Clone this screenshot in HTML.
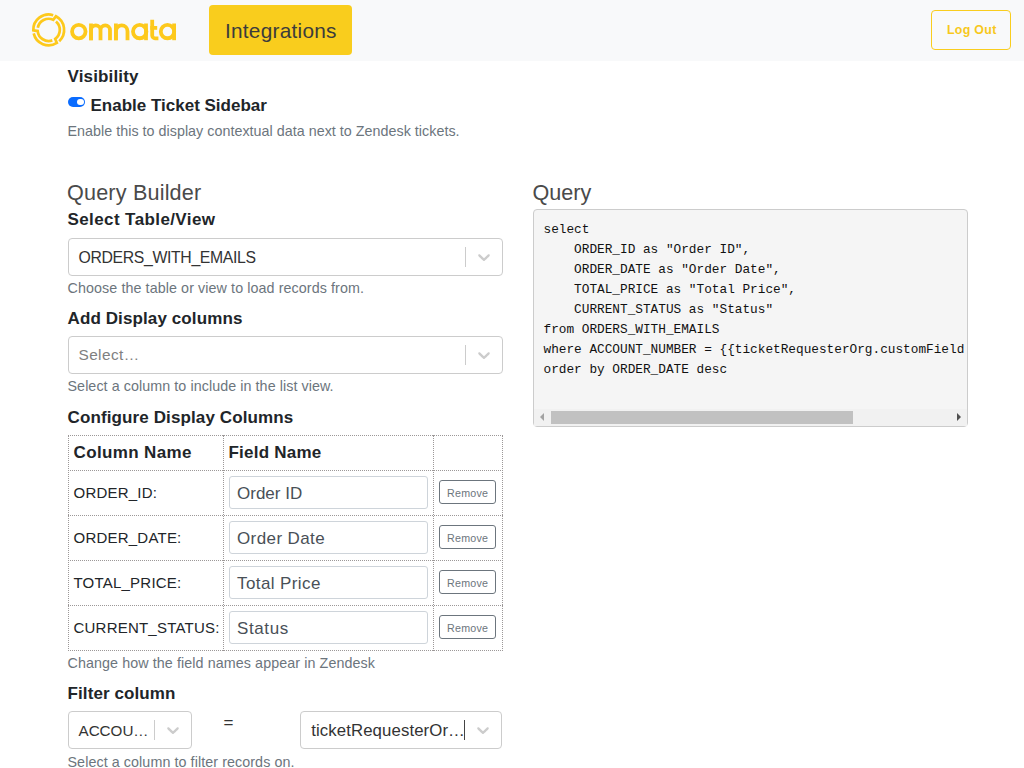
<!DOCTYPE html>
<html><head><meta charset="utf-8"><title>Omnata</title>
<style>
html,body{margin:0;padding:0;background:#fff;width:1024px;height:768px;overflow:hidden;position:relative}
.t{position:absolute;white-space:pre}
.b{position:absolute}
</style></head><body>
<div class="b" style="left:0px;top:0px;width:1024px;height:61px;background:#f8f9fa"></div>
<svg width="200" height="60" viewBox="0 0 200 60" style="position:absolute;left:0;top:0"><path d="M37.80,27.78 A11.1,11.1 0 0 1 53.21,19.76 L55.93,16.30 A15.4,15.4 0 0 1 59.20,41.16" fill="none" stroke="#fdc91c" stroke-width="2.7"/><path d="M55.98,21.52 A11.1,11.1 0 0 1 55.22,38.88 L56.86,42.96 A15.4,15.4 0 0 1 33.69,33.36" fill="none" stroke="#fdc91c" stroke-width="2.7"/><path d="M52.31,40.40 A11.1,11.1 0 0 1 37.66,31.06 L33.31,30.44 A15.4,15.4 0 0 1 53.20,15.17" fill="none" stroke="#fdc91c" stroke-width="2.7"/><g fill="none" stroke="#fdc91c" stroke-width="3.8" stroke-linecap="butt"><circle cx="78.8" cy="31.55" r="6.75"/><path d="M91,40.2 V30.15 A4.75,4.75 0 0 1 100.5,30.15 V40.2 M100.5,30.15 A4.75,4.75 0 0 1 110,30.15 V40.2"/><path d="M91,23.5 V40.2"/><path d="M115.9,40.2 V31.199999999999996 A5.799999999999997,5.799999999999997 0 0 1 127.5,31.199999999999996 V40.2"/><path d="M115.9,23.5 V40.2"/><circle cx="139.7" cy="31.55" r="6.7"/><path d="M146,23.5 V40.2"/><path d="M152.2,19.7 V35.5 A2.8,2.8 0 0 0 155,38.300000000000004 H158.4"/><path d="M150.3,27.9 H157.2"/><circle cx="167.5" cy="31.55" r="6.7"/><path d="M174.1,23.5 V40.2"/></g></svg>
<div class="b" style="left:209px;top:5px;width:143px;height:50px;background:#f9cd1d;border-radius:4px"></div>
<div class="t" style="left:225px;top:18.81px;font-size:20.8px;line-height:24.96px;color:#3c3c3c;font-weight:400;font-family:'Liberation Sans',sans-serif;letter-spacing:0.25px;">Integrations</div>
<div class="b" style="left:931px;top:10px;width:80px;height:40px;border:1px solid #f9cd1d;border-radius:4px;box-sizing:border-box"></div>
<div class="t" style="left:947px;top:23.26px;font-size:12.4px;line-height:14.88px;color:#f7c81c;font-weight:700;font-family:'Liberation Sans',sans-serif;letter-spacing:0.3px;">Log Out</div>
<div class="t" style="left:67.5px;top:66.91px;font-size:17px;line-height:20.4px;color:#212529;font-weight:700;font-family:'Liberation Sans',sans-serif;letter-spacing:0.15px;">Visibility</div>
<div class="b" style="left:68px;top:97px;width:17px;height:10px;background:#0a6cff;border-radius:5px"></div>
<div class="b" style="left:77.4px;top:98.8px;width:6.199999999999989px;height:6.200000000000003px;background:#fff;border-radius:50%"></div>
<div class="t" style="left:90.5px;top:95.91px;font-size:17px;line-height:20.4px;color:#212529;font-weight:700;font-family:'Liberation Sans',sans-serif;letter-spacing:0px;">Enable Ticket Sidebar</div>
<div class="t" style="left:67.5px;top:122.97px;font-size:14.3px;line-height:17.16px;color:#6c757d;font-weight:400;font-family:'Liberation Sans',sans-serif;letter-spacing:0.03px;">Enable this to display contextual data next to Zendesk tickets.</div>
<div class="t" style="left:67px;top:179.56px;font-size:21.6px;line-height:25.92px;color:#4a4a4a;font-weight:400;font-family:'Liberation Sans',sans-serif;letter-spacing:0.18px;">Query Builder</div>
<div class="t" style="left:67.5px;top:210.11px;font-size:17px;line-height:20.4px;color:#212529;font-weight:700;font-family:'Liberation Sans',sans-serif;letter-spacing:0.4px;">Select Table/View</div>
<div class="b" style="left:68px;top:238px;width:435px;height:38px;border:1px solid #ccc;border-radius:4px;box-sizing:border-box;background:#fff"></div>
<div class="b" style="left:465px;top:247px;width:1px;height:20px;background:#ccc"></div>
<svg width="20" height="20" viewBox="0 0 20 20" style="position:absolute;left:474px;top:247.0px"><path fill="#ccc" d="M4.516 7.548c0.436-0.446 1.043-0.481 1.576 0l3.908 3.747 3.908-3.747c0.533-0.481 1.141-0.446 1.574 0 0.436 0.445 0.408 1.197 0 1.615-0.406 0.418-4.695 4.502-4.695 4.502-0.217 0.223-0.502 0.335-0.787 0.335s-0.57-0.112-0.789-0.335c0 0-4.287-4.084-4.695-4.502s-0.436-1.17 0-1.615z"/></svg>
<div class="t" style="left:78.5px;top:248.55px;font-size:15.8px;line-height:18.96px;color:#333;font-weight:400;font-family:'Liberation Sans',sans-serif;letter-spacing:-0.35px;">ORDERS_WITH_EMAILS</div>
<div class="t" style="left:67.5px;top:279.97px;font-size:14.3px;line-height:17.16px;color:#6c757d;font-weight:400;font-family:'Liberation Sans',sans-serif;letter-spacing:0.09px;">Choose the table or view to load records from.</div>
<div class="t" style="left:67.5px;top:308.51px;font-size:17px;line-height:20.4px;color:#212529;font-weight:700;font-family:'Liberation Sans',sans-serif;letter-spacing:0.11px;">Add Display columns</div>
<div class="b" style="left:68px;top:336px;width:435px;height:38px;border:1px solid #ccc;border-radius:4px;box-sizing:border-box;background:#fff"></div>
<div class="b" style="left:465px;top:345px;width:1px;height:20px;background:#ccc"></div>
<svg width="20" height="20" viewBox="0 0 20 20" style="position:absolute;left:474px;top:345.0px"><path fill="#ccc" d="M4.516 7.548c0.436-0.446 1.043-0.481 1.576 0l3.908 3.747 3.908-3.747c0.533-0.481 1.141-0.446 1.574 0 0.436 0.445 0.408 1.197 0 1.615-0.406 0.418-4.695 4.502-4.695 4.502-0.217 0.223-0.502 0.335-0.787 0.335s-0.57-0.112-0.789-0.335c0 0-4.287-4.084-4.695-4.502s-0.436-1.17 0-1.615z"/></svg>
<div class="t" style="left:78.5px;top:346.42px;font-size:15.4px;line-height:18.48px;color:#808080;font-weight:400;font-family:'Liberation Sans',sans-serif;letter-spacing:0.4px;">Select…</div>
<div class="t" style="left:67.5px;top:378.27px;font-size:14.3px;line-height:17.16px;color:#6c757d;font-weight:400;font-family:'Liberation Sans',sans-serif;letter-spacing:0.07px;">Select a column to include in the list view.</div>
<div class="t" style="left:67.5px;top:407.51px;font-size:17px;line-height:20.4px;color:#212529;font-weight:700;font-family:'Liberation Sans',sans-serif;letter-spacing:0.12px;">Configure Display Columns</div>
<div class="b" style="left:68px;top:435px;width:435px;height:1px;border-top:1px dotted #9c9898;box-sizing:border-box"></div>
<div class="b" style="left:68px;top:470px;width:435px;height:1px;border-top:1px dotted #9c9898;box-sizing:border-box"></div>
<div class="b" style="left:68px;top:515px;width:435px;height:1px;border-top:1px dotted #9c9898;box-sizing:border-box"></div>
<div class="b" style="left:68px;top:560px;width:435px;height:1px;border-top:1px dotted #9c9898;box-sizing:border-box"></div>
<div class="b" style="left:68px;top:605px;width:435px;height:1px;border-top:1px dotted #9c9898;box-sizing:border-box"></div>
<div class="b" style="left:68px;top:650px;width:435px;height:1px;border-top:1px dotted #9c9898;box-sizing:border-box"></div>
<div class="b" style="left:68px;top:435px;width:1px;height:216px;border-left:1px dotted #9c9898;box-sizing:border-box"></div>
<div class="b" style="left:223px;top:435px;width:1px;height:216px;border-left:1px dotted #9c9898;box-sizing:border-box"></div>
<div class="b" style="left:433px;top:435px;width:1px;height:216px;border-left:1px dotted #9c9898;box-sizing:border-box"></div>
<div class="b" style="left:502px;top:435px;width:1px;height:216px;border-left:1px dotted #9c9898;box-sizing:border-box"></div>
<div class="t" style="left:73.5px;top:443.21px;font-size:17px;line-height:20.4px;color:#212529;font-weight:700;font-family:'Liberation Sans',sans-serif;letter-spacing:0.36px;">Column Name</div>
<div class="t" style="left:228.5px;top:443.21px;font-size:17px;line-height:20.4px;color:#212529;font-weight:700;font-family:'Liberation Sans',sans-serif;letter-spacing:0.22px;">Field Name</div>
<div class="t" style="left:73.5px;top:484.10px;font-size:15px;line-height:18.0px;color:#212529;font-weight:400;font-family:'Liberation Sans',sans-serif;letter-spacing:0.22px;">ORDER_ID:</div>
<div class="b" style="left:229px;top:476px;width:199px;height:33px;border:1px solid #ced4da;border-radius:3px;box-sizing:border-box"></div>
<div class="t" style="left:237px;top:483.91px;font-size:17px;line-height:20.4px;color:#495057;font-weight:400;font-family:'Liberation Sans',sans-serif;letter-spacing:0px;">Order ID</div>
<div class="b" style="left:439px;top:480px;width:57px;height:24px;border:1px solid #6c757d;border-radius:3px;box-sizing:border-box"></div>
<div class="t" style="left:447px;top:486.87px;font-size:10.7px;line-height:12.84px;color:#6c757d;font-weight:400;font-family:'Liberation Sans',sans-serif;letter-spacing:0.25px;">Remove</div>
<div class="t" style="left:73.5px;top:529.10px;font-size:15px;line-height:18.0px;color:#212529;font-weight:400;font-family:'Liberation Sans',sans-serif;letter-spacing:0.22px;">ORDER_DATE:</div>
<div class="b" style="left:229px;top:521px;width:199px;height:33px;border:1px solid #ced4da;border-radius:3px;box-sizing:border-box"></div>
<div class="t" style="left:237px;top:528.91px;font-size:17px;line-height:20.4px;color:#495057;font-weight:400;font-family:'Liberation Sans',sans-serif;letter-spacing:0.4px;">Order Date</div>
<div class="b" style="left:439px;top:525px;width:57px;height:24px;border:1px solid #6c757d;border-radius:3px;box-sizing:border-box"></div>
<div class="t" style="left:447px;top:531.87px;font-size:10.7px;line-height:12.84px;color:#6c757d;font-weight:400;font-family:'Liberation Sans',sans-serif;letter-spacing:0.25px;">Remove</div>
<div class="t" style="left:73.5px;top:574.10px;font-size:15px;line-height:18.0px;color:#212529;font-weight:400;font-family:'Liberation Sans',sans-serif;letter-spacing:0.22px;">TOTAL_PRICE:</div>
<div class="b" style="left:229px;top:566px;width:199px;height:33px;border:1px solid #ced4da;border-radius:3px;box-sizing:border-box"></div>
<div class="t" style="left:237px;top:573.91px;font-size:17px;line-height:20.4px;color:#495057;font-weight:400;font-family:'Liberation Sans',sans-serif;letter-spacing:0.4px;">Total Price</div>
<div class="b" style="left:439px;top:570px;width:57px;height:24px;border:1px solid #6c757d;border-radius:3px;box-sizing:border-box"></div>
<div class="t" style="left:447px;top:576.87px;font-size:10.7px;line-height:12.84px;color:#6c757d;font-weight:400;font-family:'Liberation Sans',sans-serif;letter-spacing:0.25px;">Remove</div>
<div class="t" style="left:73.5px;top:619.10px;font-size:15px;line-height:18.0px;color:#212529;font-weight:400;font-family:'Liberation Sans',sans-serif;letter-spacing:0.22px;">CURRENT_STATUS:</div>
<div class="b" style="left:229px;top:611px;width:199px;height:33px;border:1px solid #ced4da;border-radius:3px;box-sizing:border-box"></div>
<div class="t" style="left:237px;top:618.91px;font-size:17px;line-height:20.4px;color:#495057;font-weight:400;font-family:'Liberation Sans',sans-serif;letter-spacing:0.6px;">Status</div>
<div class="b" style="left:439px;top:615px;width:57px;height:24px;border:1px solid #6c757d;border-radius:3px;box-sizing:border-box"></div>
<div class="t" style="left:447px;top:621.87px;font-size:10.7px;line-height:12.84px;color:#6c757d;font-weight:400;font-family:'Liberation Sans',sans-serif;letter-spacing:0.25px;">Remove</div>
<div class="t" style="left:67.5px;top:654.97px;font-size:14.3px;line-height:17.16px;color:#6c757d;font-weight:400;font-family:'Liberation Sans',sans-serif;letter-spacing:0.09px;">Change how the field names appear in Zendesk</div>
<div class="t" style="left:67.5px;top:683.71px;font-size:17px;line-height:20.4px;color:#212529;font-weight:700;font-family:'Liberation Sans',sans-serif;letter-spacing:0.1px;">Filter column</div>
<div class="b" style="left:68px;top:711px;width:124px;height:38px;border:1px solid #ccc;border-radius:4px;box-sizing:border-box;background:#fff"></div>
<div class="b" style="left:154px;top:720px;width:1px;height:20px;background:#ccc"></div>
<svg width="20" height="20" viewBox="0 0 20 20" style="position:absolute;left:163px;top:720.0px"><path fill="#ccc" d="M4.516 7.548c0.436-0.446 1.043-0.481 1.576 0l3.908 3.747 3.908-3.747c0.533-0.481 1.141-0.446 1.574 0 0.436 0.445 0.408 1.197 0 1.615-0.406 0.418-4.695 4.502-4.695 4.502-0.217 0.223-0.502 0.335-0.787 0.335s-0.57-0.112-0.789-0.335c0 0-4.287-4.084-4.695-4.502s-0.436-1.17 0-1.615z"/></svg>
<div class="t" style="left:78.5px;top:722.11px;font-size:15.2px;line-height:18.24px;color:#333;font-weight:400;font-family:'Liberation Sans',sans-serif;letter-spacing:0px;">ACCOU…</div>
<div class="t" style="left:223.5px;top:712.71px;font-size:17px;line-height:20.4px;color:#333;font-weight:400;font-family:'Liberation Sans',sans-serif;letter-spacing:0px;">=</div>
<div class="b" style="left:300px;top:711px;width:202px;height:38px;border:1px solid #ccc;border-radius:4px;box-sizing:border-box;background:#fff"></div>
<div class="b" style="left:464px;top:720px;width:1px;height:20px;background:#444"></div>
<svg width="20" height="20" viewBox="0 0 20 20" style="position:absolute;left:473px;top:720.0px"><path fill="#ccc" d="M4.516 7.548c0.436-0.446 1.043-0.481 1.576 0l3.908 3.747 3.908-3.747c0.533-0.481 1.141-0.446 1.574 0 0.436 0.445 0.408 1.197 0 1.615-0.406 0.418-4.695 4.502-4.695 4.502-0.217 0.223-0.502 0.335-0.787 0.335s-0.57-0.112-0.789-0.335c0 0-4.287-4.084-4.695-4.502s-0.436-1.17 0-1.615z"/></svg>
<div class="t" style="left:311.2px;top:720.80px;font-size:16.8px;line-height:20.16px;color:#333;font-weight:400;font-family:'Liberation Sans',sans-serif;letter-spacing:0.1px;">ticketRequesterOr…</div>
<div class="t" style="left:67.5px;top:753.77px;font-size:14.3px;line-height:17.16px;color:#6c757d;font-weight:400;font-family:'Liberation Sans',sans-serif;letter-spacing:0.08px;">Select a column to filter records on.</div>
<div class="t" style="left:532.5px;top:179.86px;font-size:21.6px;line-height:25.92px;color:#4a4a4a;font-weight:400;font-family:'Liberation Sans',sans-serif;letter-spacing:0px;">Query</div>
<div class="b" style="left:533px;top:209px;width:435px;height:218px;background:#f5f5f5;border:1px solid #ccc;border-radius:4px;box-sizing:border-box;overflow:hidden"></div>
<div class="b" style="left:534px;top:210px;width:433px;height:199px;overflow:hidden"><div class="t" style="left:9.5px;top:12.45px;font-size:12.75px;line-height:15.3px;color:#111;font-weight:400;font-family:'Liberation Mono',sans-serif;letter-spacing:0px;">select</div>
<div class="t" style="left:9.5px;top:32.45px;font-size:12.75px;line-height:15.3px;color:#111;font-weight:400;font-family:'Liberation Mono',sans-serif;letter-spacing:0px;">    ORDER_ID as "Order ID",</div>
<div class="t" style="left:9.5px;top:52.45px;font-size:12.75px;line-height:15.3px;color:#111;font-weight:400;font-family:'Liberation Mono',sans-serif;letter-spacing:0px;">    ORDER_DATE as "Order Date",</div>
<div class="t" style="left:9.5px;top:72.45px;font-size:12.75px;line-height:15.3px;color:#111;font-weight:400;font-family:'Liberation Mono',sans-serif;letter-spacing:0px;">    TOTAL_PRICE as "Total Price",</div>
<div class="t" style="left:9.5px;top:92.45px;font-size:12.75px;line-height:15.3px;color:#111;font-weight:400;font-family:'Liberation Mono',sans-serif;letter-spacing:0px;">    CURRENT_STATUS as "Status"</div>
<div class="t" style="left:9.5px;top:112.45px;font-size:12.75px;line-height:15.3px;color:#111;font-weight:400;font-family:'Liberation Mono',sans-serif;letter-spacing:0px;">from ORDERS_WITH_EMAILS</div>
<div class="t" style="left:9.5px;top:132.45px;font-size:12.75px;line-height:15.3px;color:#111;font-weight:400;font-family:'Liberation Mono',sans-serif;letter-spacing:0px;">where ACCOUNT_NUMBER = {{ticketRequesterOrg.customField</div>
<div class="t" style="left:9.5px;top:152.45px;font-size:12.75px;line-height:15.3px;color:#111;font-weight:400;font-family:'Liberation Mono',sans-serif;letter-spacing:0px;">order by ORDER_DATE desc</div>
</div>
<div class="b" style="left:534px;top:409px;width:433px;height:17px;background:#f1f1f1"></div>
<div class="b" style="left:551px;top:411px;width:302px;height:13px;background:#c1c1c1"></div>
<svg width="8" height="10" style="position:absolute;left:538px;top:412px"><path d="M6,1 L2,5 L6,9z" fill="#a3a3a3"/></svg>
<svg width="8" height="10" style="position:absolute;left:955px;top:412px"><path d="M2,1 L6,5 L2,9z" fill="#505050"/></svg>
</body></html>
